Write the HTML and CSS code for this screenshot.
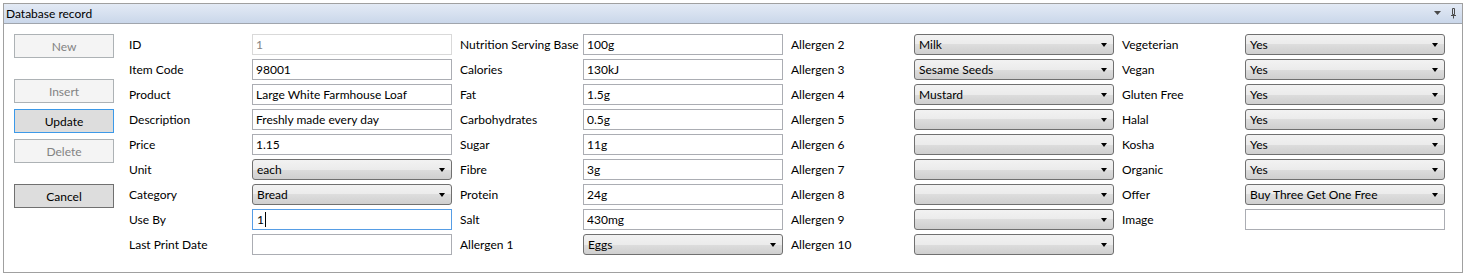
FILE: index.html
```
<!DOCTYPE html>
<html lang="en">
<head>
    <meta charset="UTF-8">
    <title>Database record</title>
    <link rel="stylesheet" href="styles.css">
</head>
<body>
    <div class="panel">
        <div class="panel-header">
            <span class="panel-title">Database record</span>
            <div class="panel-tools">
                <svg width="8" height="5" viewBox="0 0 8 5"><path d="M0 0H7L3.5 4Z" fill="#4a4a4a"/></svg>
                <svg width="7" height="11" viewBox="0 0 7 11"><path d="M2.5 0.5H4.5V6.5H2.5Z M1 7.5H6 M3.5 7.5V10.5" fill="none" stroke="#4a4a4a" stroke-width="1"/></svg>
            </div>
        </div>

        <div class="panel-body">
            <div class="actions">
                <button class="btn disabled" disabled>New</button>
                <button class="btn disabled spaced" disabled>Insert</button>
                <button class="btn focused">Update</button>
                <button class="btn disabled" disabled>Delete</button>
                <button class="btn spaced">Cancel</button>
            </div>

            <div class="fields">
                <div class="field-col">
                    <div class="field"><label>ID</label><input class="textbox disabled" value="1" disabled></div>
                    <div class="field"><label>Item Code</label><input class="textbox" value="98001"></div>
                    <div class="field"><label>Product</label><input class="textbox" value="Large White Farmhouse Loaf"></div>
                    <div class="field"><label>Description</label><input class="textbox" value="Freshly made every day"></div>
                    <div class="field"><label>Price</label><input class="textbox" value="1.15"></div>
                    <div class="field"><label>Unit</label><div class="combo"><span>each</span><i class="arrow"></i></div></div>
                    <div class="field"><label>Category</label><div class="combo"><span>Bread</span><i class="arrow"></i></div></div>
                    <div class="field"><label>Use By</label><div class="textbox focused"><span>1</span><i class="caret"></i></div></div>
                    <div class="field"><label>Last Print Date</label><input class="textbox" value=""></div>
                </div>

                <div class="field-col">
                    <div class="field"><label>Nutrition Serving Base</label><input class="textbox" value="100g"></div>
                    <div class="field"><label>Calories</label><input class="textbox" value="130kJ"></div>
                    <div class="field"><label>Fat</label><input class="textbox" value="1.5g"></div>
                    <div class="field"><label>Carbohydrates</label><input class="textbox" value="0.5g"></div>
                    <div class="field"><label>Sugar</label><input class="textbox" value="11g"></div>
                    <div class="field"><label>Fibre</label><input class="textbox" value="3g"></div>
                    <div class="field"><label>Protein</label><input class="textbox" value="24g"></div>
                    <div class="field"><label>Salt</label><input class="textbox" value="430mg"></div>
                    <div class="field"><label>Allergen 1</label><div class="combo"><span>Eggs</span><i class="arrow"></i></div></div>
                </div>

                <div class="field-col">
                    <div class="field"><label>Allergen 2</label><div class="combo"><span>Milk</span><i class="arrow"></i></div></div>
                    <div class="field"><label>Allergen 3</label><div class="combo"><span>Sesame Seeds</span><i class="arrow"></i></div></div>
                    <div class="field"><label>Allergen 4</label><div class="combo"><span>Mustard</span><i class="arrow"></i></div></div>
                    <div class="field"><label>Allergen 5</label><div class="combo"><span></span><i class="arrow"></i></div></div>
                    <div class="field"><label>Allergen 6</label><div class="combo"><span></span><i class="arrow"></i></div></div>
                    <div class="field"><label>Allergen 7</label><div class="combo"><span></span><i class="arrow"></i></div></div>
                    <div class="field"><label>Allergen 8</label><div class="combo"><span></span><i class="arrow"></i></div></div>
                    <div class="field"><label>Allergen 9</label><div class="combo"><span></span><i class="arrow"></i></div></div>
                    <div class="field"><label>Allergen 10</label><div class="combo"><span></span><i class="arrow"></i></div></div>
                </div>

                <div class="field-col">
                    <div class="field"><label>Vegeterian</label><div class="combo"><span>Yes</span><i class="arrow"></i></div></div>
                    <div class="field"><label>Vegan</label><div class="combo"><span>Yes</span><i class="arrow"></i></div></div>
                    <div class="field"><label>Gluten Free</label><div class="combo"><span>Yes</span><i class="arrow"></i></div></div>
                    <div class="field"><label>Halal</label><div class="combo"><span>Yes</span><i class="arrow"></i></div></div>
                    <div class="field"><label>Kosha</label><div class="combo"><span>Yes</span><i class="arrow"></i></div></div>
                    <div class="field"><label>Organic</label><div class="combo"><span>Yes</span><i class="arrow"></i></div></div>
                    <div class="field"><label>Offer</label><div class="combo"><span>Buy Three Get One Free</span><i class="arrow"></i></div></div>
                    <div class="field"><label>Image</label><input class="textbox" value=""></div>
                </div>
            </div>
        </div>
    </div>
</body>
</html>
```

FILE: styles.css
```
* {
    box-sizing: border-box;
}

body {
    margin: 0;
    background-color: #fff;
    color: #000;
    font-family: Lato, "Noto Sans", sans-serif;
    font-size: 12px;
}

.panel {
    margin: 3px 0 0 3px;
    width: 1460px;
    height: 270px;
    border: 1px solid #a0a0a0;
}

.panel-header {
    height: 20px;
    display: flex;
    align-items: center;
    justify-content: space-between;
    padding: 0 5px 0 2px;
    background: linear-gradient(#e3eaf5, #cad7ea);
    border-bottom: 1px solid #a0a5ad;
}

.panel-tools {
    display: flex;
    align-items: center;
    gap: 8px;
}

.panel-body {
    display: flex;
    gap: 15px;
    padding: 10px 0 0 10px;
}

.actions {
    display: flex;
    flex-direction: column;
    width: 100px;
}

.btn {
    height: 24px;
    margin-top: 6px;
    padding: 0;
    border: 1px solid #707070;
    background-color: #dddddd;
    color: #000;
    font-family: inherit;
    font-size: 12px;
}

.btn:first-child {
    margin-top: 0;
}

.btn.spaced {
    margin-top: 21px;
}

.btn.disabled {
    background-color: #f4f4f4;
    border-color: #adb2b5;
    color: #838383;
}

.btn.focused {
    border-color: #3c99e8;
}

.fields {
    display: flex;
    gap: 8px;
}

.field-col {
    display: flex;
    flex-direction: column;
}

.field {
    display: grid;
    grid-template-columns: 123px 200px;
    align-items: center;
    height: 21px;
    margin-bottom: 4px;
}

.textbox {
    height: 21px;
    width: 200px;
    padding: 0 3px;
    border: 1px solid #abadb3;
    background-color: #fff;
    color: #000;
    font-family: inherit;
    font-size: 12px;
    outline: none;
}

.textbox.disabled {
    border-color: #d9d9d9;
    color: #838383;
}

.textbox.focused {
    display: flex;
    align-items: center;
    border-color: #569de5;
    padding-left: 4px;
}

.caret {
    width: 1px;
    height: 15px;
    margin-left: 1px;
    background-color: #000;
}

.combo {
    height: 21px;
    display: flex;
    align-items: center;
    justify-content: space-between;
    padding: 0 6px 0 4px;
    border: 1px solid #707070;
    border-radius: 3px;
    background: linear-gradient(#f2f2f2 0%, #ebebeb 50%, #dddddd 50%, #cfcfcf 100%);
}

.arrow {
    width: 0;
    height: 0;
    border-left: 3.5px solid transparent;
    border-right: 3.5px solid transparent;
    border-top: 4px solid #000;
}
```
